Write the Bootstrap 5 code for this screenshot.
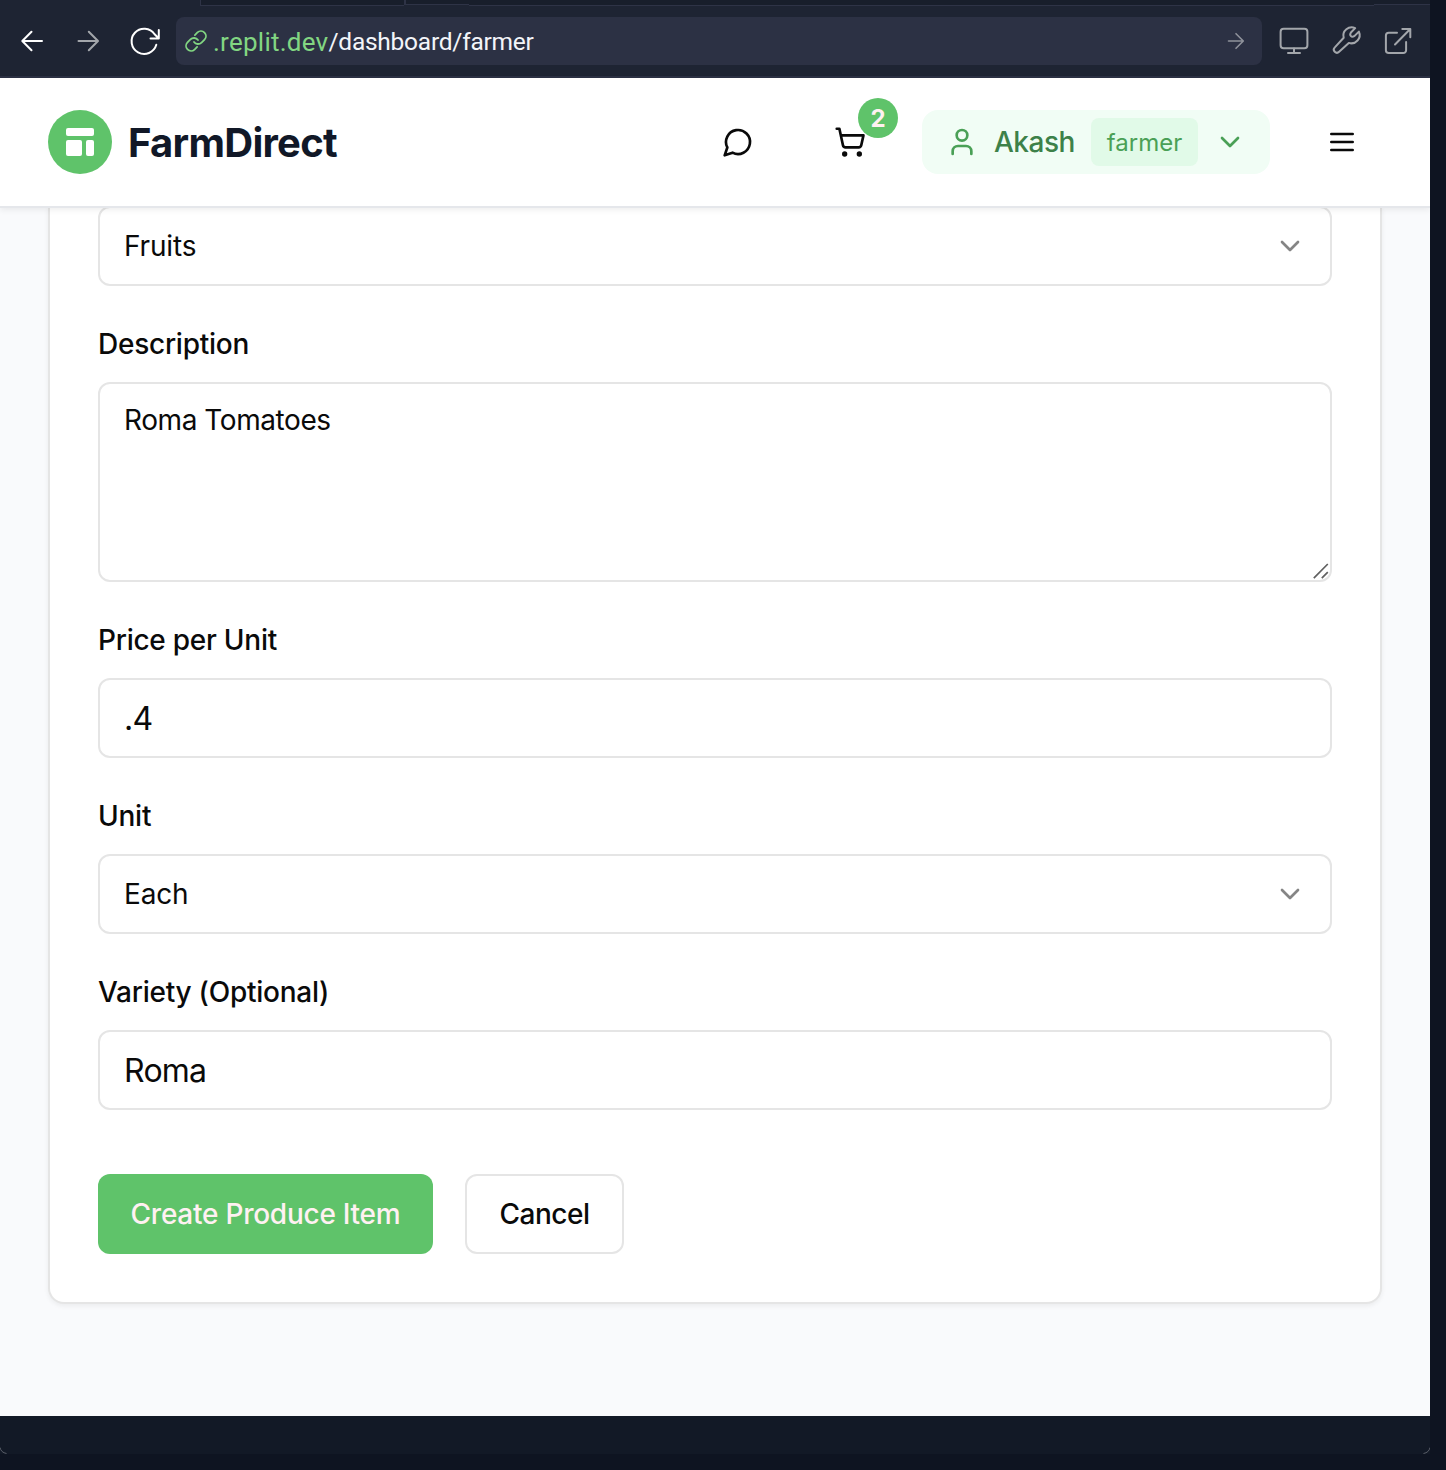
<!DOCTYPE html>
<html lang="en">
<head>
<meta charset="utf-8">
<meta name="viewport" content="width=device-width, initial-scale=1">
<title>FarmDirect – Farmer dashboard</title>
<link href="https://cdn.jsdelivr.net/npm/bootstrap@5.3.0/dist/css/bootstrap.min.css" rel="stylesheet">
<style>
  body { background: #0e1421; font-family: Inter, "Liberation Sans", sans-serif; color: #0a0a0a; font-size: 28px; line-height: 40px; height: 1470px; }
  svg { display: block; flex: none; }
  .ico { width: 32px; height: 32px; fill: none; stroke: currentColor; stroke-width: 2; stroke-linecap: round; stroke-linejoin: round; }
  .pane { width: 1430px; height: 1454px; background: #121926; }

  /* browser chrome */
  .tabstrip { height: 6px; background: #1e2433; }
  .tabstrip span { background: #181e2b; border-bottom: 1px solid #2e3346; }
  .tab-gap { width: 200px; background: #1e2433 !important; border: 0 !important; }
  .tab-a { width: 204px; border-left: 1px solid #2e3346; }
  .tab-b { width: 65px; height: 5px; border-left: 2px solid #2e3346; }
  .tab-c { width: 56px; height: 5px; }
  .toolbar { height: 72px; background: #1e2433; border-bottom: 2px solid #2c3144; color: #a3a6ab; }
  .toolbar svg { fill: none; stroke: currentColor; stroke-linecap: round; stroke-linejoin: round; }
  .nav-tools { width: 176px; padding-left: 4px; }
  .address { width: 1086px; height: 48px; border-radius: 8px; background: #2c3144; font-family: Roboto, sans-serif; line-height: 48px; padding: 0 17px 0 8px; }
  .host { color: #82d682; font-size: 26px; letter-spacing: .25px; margin-left: 5px; padding-top: 2px; }
  .route { color: #f3f5f9; font-size: 24.5px; letter-spacing: -.25px; padding-top: 2px; }

  /* application header */
  .app-header { height: 130px; padding: 0 48px; border-bottom: 2px solid #e5e7eb; box-shadow: 0 2px 6px rgba(0,0,0,.07); z-index: 2; }
  .logo { width: 64px; height: 64px; background: #5fc36a; }
  .brand-name { font-size: 40px; font-weight: 700; letter-spacing: -.72px; color: #111827; padding-top: 2px; }
  .header-tools { gap: 32px; }
  .icon-btn { width: 80px; height: 80px; }
  .count { width: 40px; height: 40px; top: -4px; right: -8px; padding-top: 2px; background: #5fc36a; color: #fff1f2; font-size: 24px; font-weight: 700; }
  .user-pill { height: 64px; width: 348px; padding: 0 24px; border-radius: 16px; background: #f1fdf5; color: #4aa056; gap: 16px; }
  .user-name { color: #3d8149; font-weight: 550; letter-spacing: -.5px; width: 81px; }
  .role { height: 48px; line-height: 50px; width: 107px; border-radius: 8px; background: #e1fae8; font-size: 24px; }

  /* page and form */
  .page { height: 1210px; margin-top: -2px; padding: 0 48px; background: #f9fafc; }
  .panel { height: 1098px; background: #fff; border: 2px solid #e5e5e5; border-top: 0; border-radius: 0 0 16px 16px; padding: 0 48px; box-shadow: 0 2px 5px rgba(0,0,0,.06); }
  .field-label { font-weight: 550; line-height: 28px; letter-spacing: -.25px; margin: 44px 0 24px; }
  .field { display: flex; align-items: center; height: 80px; width: 100%; border: 2px solid #e5e5e5; border-radius: 12px; background: #fff; padding: 0 24px; color: #0a0a0a; outline: 0; letter-spacing: -.15px; }
  .field.big { font-size: 32px; letter-spacing: -.75px; }
  .field .ico { color: #858585; }
  textarea.field { display: block; height: 200px; padding: 16px 24px; resize: none; letter-spacing: -.43px; }
  .grip { right: 2px; bottom: 2px; width: 18px; height: 18px; fill: none; stroke: #606060; stroke-width: 1.7; }
  .actions { margin-top: 64px; gap: 32px; }
  .action { height: 80px; border-radius: 12px; font-size: 28px; font-weight: 550; padding: 0; }
  .action.create { width: 335px; background: #5fc36a; color: #fff1f2; letter-spacing: -.25px; }
  .action.cancel { width: 159px; border: 2px solid #e5e5e5; background: #fff; color: #0a0a0a; letter-spacing: -.5px; }
  .edge { bottom: 0; width: 7px; height: 7px; fill: none; stroke: #5a5f69; stroke-width: 1; }
</style>
<script src="https://cdn.jsdelivr.net/npm/bootstrap@5.3.0/dist/js/bootstrap.bundle.min.js"></script>
</head>
<body class="m-0 overflow-hidden">
<div class="pane position-relative overflow-hidden">
  <div class="tabstrip d-flex align-items-stretch">
    <span class="tab-gap"></span><span class="tab-a"></span><span class="tab-b"></span><span class="flex-grow-1"></span><span class="tab-c"></span>
  </div>
  <div class="toolbar d-flex align-items-center">
    <div class="nav-tools d-flex align-items-center">
      <svg class="text-white" width="56" height="32" viewBox="4 25 56 32" stroke-width="2"><path d="M42 41H22.5M31.5 31.8L22.3 41l9.2 9.2"/></svg>
      <svg width="56" height="32" viewBox="60 25 56 32" stroke-width="2"><path d="M78.5 41h19M88.8 31.8l9.2 9.2-9.2 9.2"/></svg>
      <svg class="text-white" width="56" height="32" viewBox="116 25 56 32" stroke-width="2"><path d="M156.3 44.8A12.6 12.6 0 1 1 154.6 34.2L158.6 38.3M158.8 30v8.6h-8.3"/></svg>
    </div>
    <div class="address d-flex align-items-center">
      <svg width="24" height="24" viewBox="0 0 24 24" color="#82d682" stroke-width="1.8"><path d="M10 13a5 5 0 0 0 7.54.54l3-3a5 5 0 0 0-7.07-7.07l-2.6 2.6"/><path d="M14 11a5 5 0 0 0-7.54-.54l-3 3a5 5 0 0 0 7.07 7.07l2.6-2.6"/></svg>
      <span class="host">.replit.dev</span><span class="route">/dashboard/farmer</span>
      <svg class="ms-auto" width="18" height="18" viewBox="0 0 18 18" stroke-width="1.6" color="#8f929b"><path d="M1.5 9h14.5M9 1.7L16.3 9 9 16.3"/></svg>
    </div>
    <svg width="168" height="36" viewBox="1262 23 168 36" stroke-width="2">
      <rect x="1280.6" y="28.8" width="26.8" height="19.4" rx="3"/><path d="M1294 48.5V53M1288 53h12"/>
      <path transform="translate(1333 26)" d="M22.2 2.1A8.3 8.3 0 0 0 10.7 11.8L1.8 21.4a2.9 2.9 0 0 0 4.3 4.4L15.8 16.9A8.3 8.3 0 0 0 25.9 5.6L21.6 9.9Q19.2 11.4 17.9 10.1Q16.5 8.8 17.9 6.5Z"/>
      <path d="M1397 32.8h-8.3a2.8 2.8 0 0 0-2.8 2.8v14.6a2.8 2.8 0 0 0 2.8 2.8h14.6a2.8 2.8 0 0 0 2.8-2.8V42M1395 44.5L1410 29.3M1402.3 29h8v8.2"/>
    </svg>
  </div>

  <header class="app-header bg-white d-flex align-items-center position-relative">
    <div class="logo rounded-circle d-flex align-items-center justify-content-center">
      <svg width="28" height="28" viewBox="0 0 28 28" fill="#fff"><rect width="28" height="8" rx="2"/><rect y="12" width="16" height="16" rx="2"/><rect x="20" y="12" width="8" height="16" rx="2"/></svg>
    </div>
    <span class="brand-name ms-3">FarmDirect</span>
    <div class="header-tools ms-auto d-flex align-items-center">
      <div class="icon-btn d-flex align-items-center justify-content-center">
        <svg class="ico" viewBox="0 0 24 24"><path d="M7.9 20A9 9 0 1 0 4 16.1L2 22Z"/></svg>
      </div>
      <div class="icon-btn d-flex align-items-center justify-content-center position-relative">
        <svg class="ico" viewBox="0 0 24 24"><circle cx="8" cy="21" r="1"/><circle cx="19" cy="21" r="1"/><path d="M2.05 2.05h2l2.66 12.42a2 2 0 0 0 2 1.58h9.78a2 2 0 0 0 1.95-1.57l1.65-7.43H5.12"/></svg>
        <span class="count position-absolute rounded-circle d-flex align-items-center justify-content-center">2</span>
      </div>
      <div class="user-pill d-flex align-items-center">
        <svg class="ico" viewBox="0 0 24 24"><path d="M19 21v-2a4 4 0 0 0-4-4H9a4 4 0 0 0-4 4v2"/><circle cx="12" cy="7" r="4"/></svg>
        <span class="user-name">Akash</span>
        <span class="role text-center">farmer</span>
        <svg class="ico" viewBox="0 0 24 24"><path d="m6 9 6 6 6-6"/></svg>
      </div>
      <div class="icon-btn d-flex align-items-center justify-content-center">
        <svg class="ico" viewBox="0 0 24 24"><path d="M4 6h16M4 12h16M4 18h16"/></svg>
      </div>
    </div>
  </header>

  <main class="page">
    <form class="panel">
      <div class="field justify-content-between"><span>Fruits</span><svg class="ico" viewBox="0 0 24 24"><path d="m6 9 6 6 6-6"/></svg></div>

      <label class="field-label d-block">Description</label>
      <div class="position-relative">
        <textarea class="field">Roma Tomatoes</textarea>
        <svg class="grip position-absolute" viewBox="0 0 18 18"><path d="M1.8 16.2L15.8 2M9.8 16.2l6-6"/></svg>
      </div>

      <label class="field-label d-block">Price per Unit</label>
      <input class="field big" value=".4">

      <label class="field-label d-block">Unit</label>
      <div class="field justify-content-between"><span>Each</span><svg class="ico" viewBox="0 0 24 24"><path d="m6 9 6 6 6-6"/></svg></div>

      <label class="field-label d-block">Variety (Optional)</label>
      <input class="field big" value="Roma">

      <div class="actions d-flex">
        <button type="button" class="btn action create">Create Produce Item</button>
        <button type="button" class="btn action cancel">Cancel</button>
      </div>
    </form>
  </main>

  <svg class="edge position-absolute start-0" viewBox="0 0 7 7"><path d="M0 .5Q1 5.5 6.5 6.5"/></svg>
  <svg class="edge position-absolute end-0" viewBox="0 0 7 7"><path d="M7 .5Q6 5.5 .5 6.5"/></svg>
</div>
</body>
</html>
